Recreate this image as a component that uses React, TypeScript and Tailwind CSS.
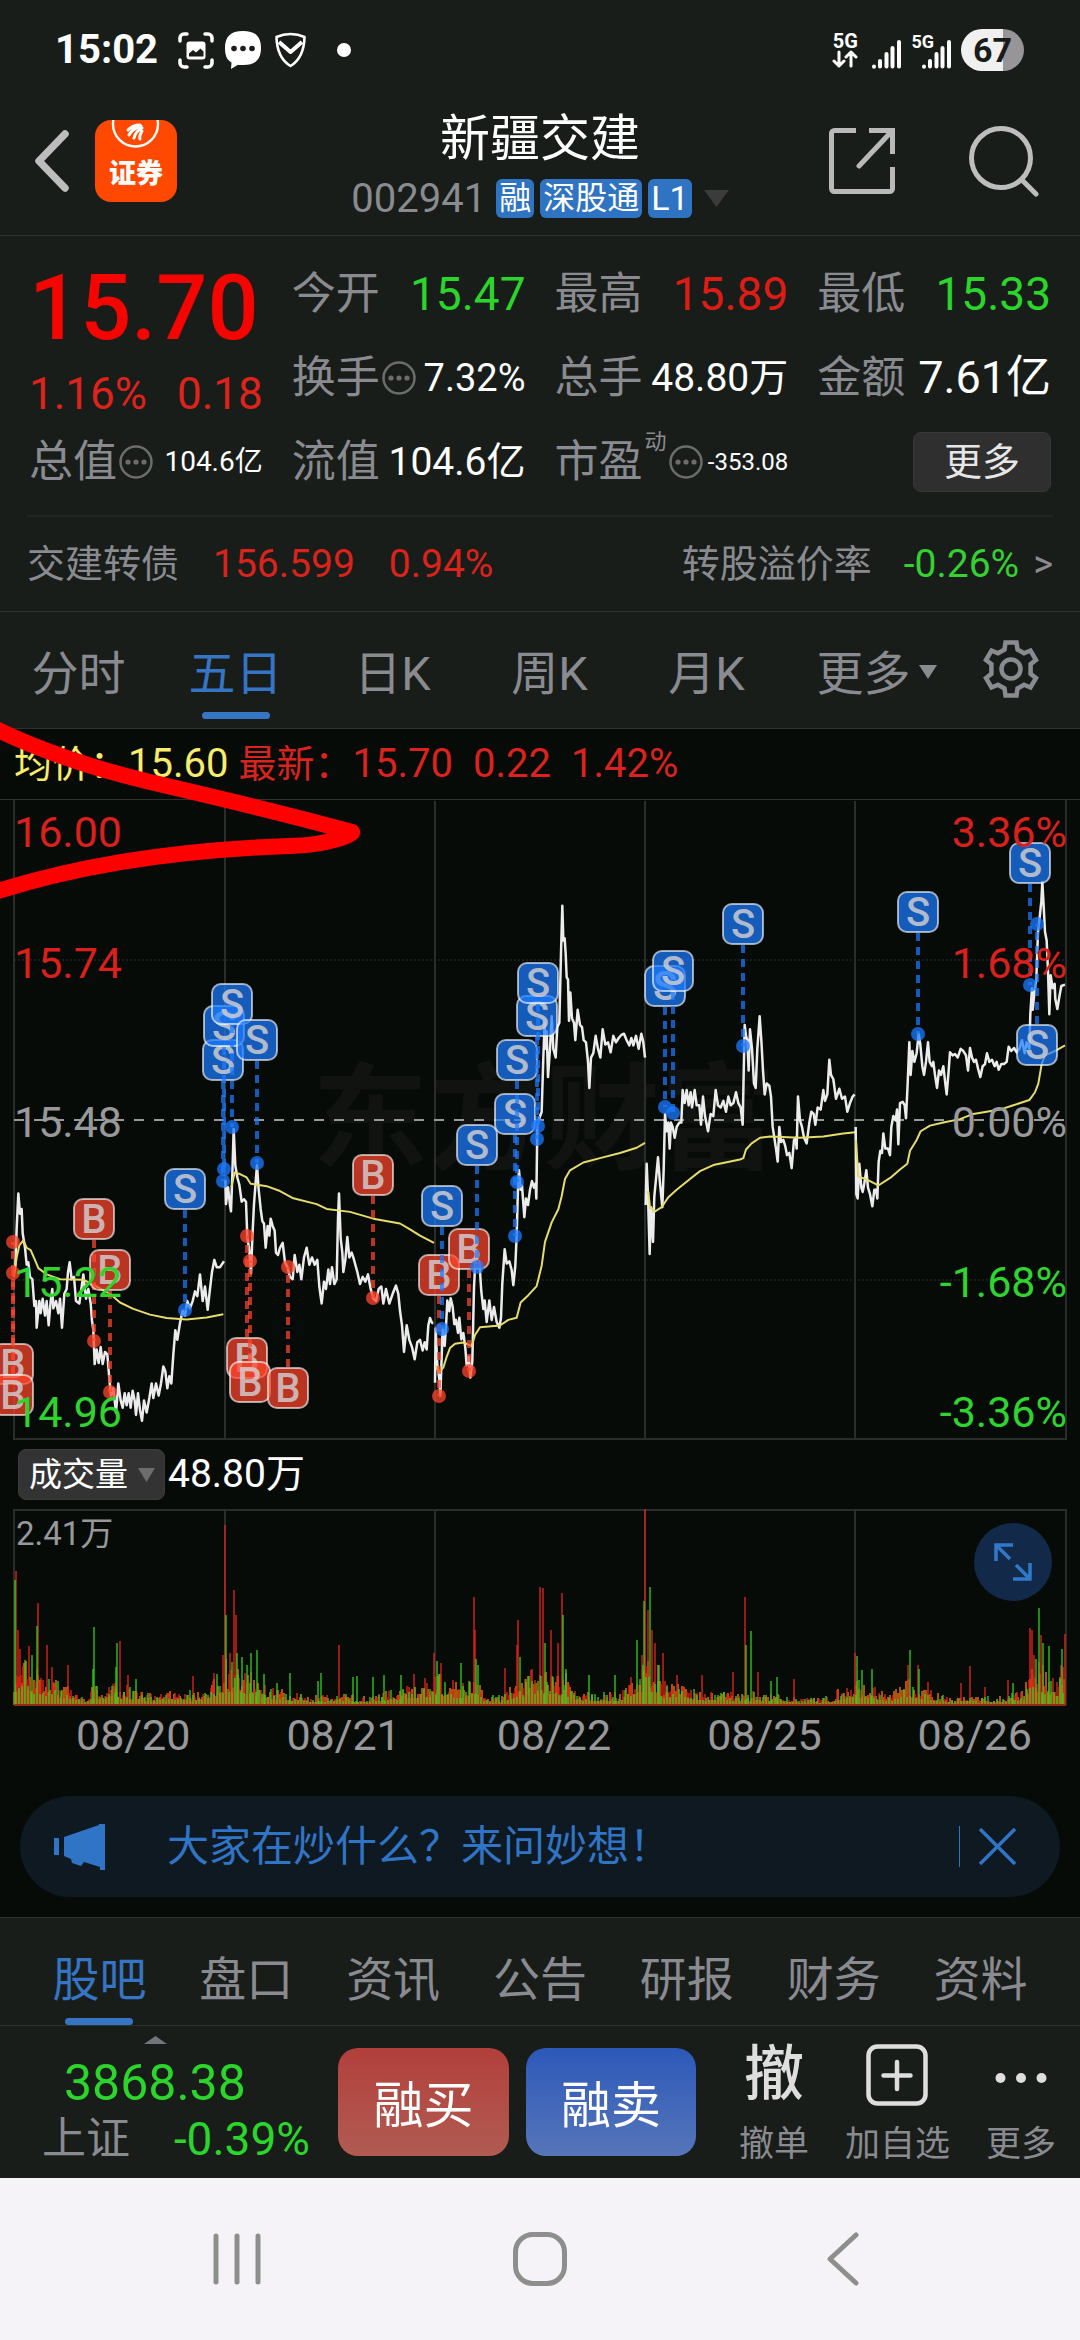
import React from "react";

const CJK = "font-['Roboto','Noto_Sans_CJK_SC',sans-serif]";

/* ---------- price chart data ---------- */

type Segment = { transform: string; price: string; average: string };

const LEFT = "translate(0 700) scale(0.33333 0.48473)";
const RIGHT = "translate(400 780) scale(0.33333 0.43366)";

const segments: Segment[] = [
  {
    transform: LEFT,
    price:
      "42,1180 46,1165 50,1090 55,1018 60,1060 65,1050 68,1100 75,1130 80,1165 85,1160 90,1190 97,1195 103,1250 108,1240 110,1295 118,1240 122,1265 128,1235 135,1270 140,1240 146,1290 152,1240 157,1215 160,1255 168,1240 175,1265 180,1235 186,1295 193,1225 200,1215 204,1180 209,1160 215,1195 222,1190 228,1240 238,1245 250,1185 258,1235 265,1215 272,1245 276,1280 280,1300 284,1370 290,1340 296,1368 302,1335 308,1370 315,1345 322,1350 328,1400 333,1435 340,1420 348,1470 355,1410 362,1445 368,1460 374,1430 380,1455 386,1430 392,1460 398,1425 404,1445 408,1475 414,1430 420,1465 426,1487 432,1445 440,1470 448,1440 455,1410 460,1440 468,1410 476,1435 483,1410 490,1375 496,1385 502,1420 508,1395 514,1410 520,1350 526,1300 532,1320 540,1285 548,1260 555,1270 562,1240 570,1255 578,1240 585,1220 592,1230 600,1185 608,1240 615,1210 623,1258 630,1215 636,1180 643,1155 650,1170 660,1170 672,1158",
    average:
      "42,1190 50,1150 58,1125 70,1115 80,1130 92,1135 108,1160 115,1172 140,1185 180,1195 250,1196 290,1210 330,1225 360,1243 400,1256 450,1268 500,1275 560,1278 620,1274 670,1267",
  },
  {
    transform: LEFT,
    price:
      "676,990 678,1040 684,1005 690,1042 693,1055 697,980 701,885 706,960 712,985 718,1000 725,1035 732,1030 738,1035 742,1110 747,1130 750,1155 753,1183 757,1110 762,1040 768,985 771,960 776,1010 782,1050 787,1075 792,1080 797,1130 803,1085 808,1105 812,1070 818,1085 824,1095 828,1140 834,1145 840,1130 848,1120 855,1160 862,1170 870,1190 878,1195 884,1145 892,1180 898,1165 904,1195 912,1150 920,1130 928,1165 936,1150 944,1165 952,1155 958,1210 965,1245 972,1200 978,1215 985,1175 990,1205 996,1170 1003,1205 1010,1195 1014,1070 1017,1018 1022,1110 1027,1140 1030,1180 1036,1155 1042,1108 1048,1150 1055,1140 1060,1150 1066,1165 1072,1180 1080,1205 1088,1190 1096,1200 1104,1185 1112,1215 1120,1235 1128,1240 1136,1215 1144,1210 1150,1245 1158,1215 1168,1245 1178,1225 1188,1208 1195,1225 1200,1260 1206,1290 1212,1345 1220,1290 1228,1320 1236,1335 1244,1360 1252,1325 1260,1320 1268,1342 1274,1325 1280,1340 1285,1290 1290,1275 1296,1285 1300,1285",
    average:
      "694,1005 704,975 720,978 740,985 752,998 800,1003 840,1013 880,1028 950,1040 980,1050 1050,1056 1120,1070 1200,1080 1230,1092 1260,1105 1302,1120",
  },
  {
    transform: RIGHT,
    price:
      "105,1390 107,1265 112,1350 118,1380 121,1420 125,1330 128,1265 134,1305 138,1260 142,1200 148,1225 152,1195 158,1215 163,1255 168,1245 174,1275 178,1240 184,1290 190,1275 196,1310 200,1350 206,1330 211,1378 217,1340 222,1170 226,1110 232,1125 238,1110 244,1180 250,1220 254,1200 260,1250 268,1200 275,1245 282,1215 290,1250 298,1263 303,1240 307,1160 314,1082 320,1115 328,1110 335,1130 340,1165 346,1120 350,1050 354,940 357,900 362,945 366,935 373,1008 378,965 384,980 390,945 396,925 402,940 407,930 409,965 412,800 418,780 425,765 430,640 434,560 438,620 440,580 444,685 450,620 455,545 460,620 467,640 472,570 478,560 483,400 487,290 490,370 494,365 497,400 500,455 504,460 507,555 511,490 516,550 522,560 526,600 533,530 540,565 546,570 551,600 558,605 564,650 568,710 573,640 580,630 587,590 594,620 601,640 608,575 616,610 624,605 632,628 640,590 648,605 656,595 664,588 672,585 680,600 688,612 694,595 700,612 708,590 716,620 724,585 730,605 735,640",
    average:
      "108,1350 118,1365 130,1355 140,1330 150,1310 165,1300 190,1297 215,1305 225,1280 240,1262 300,1258 325,1245 350,1240 362,1205 385,1188 410,1167 425,1120 435,1065 455,1020 475,990 485,960 495,920 510,900 550,882 600,872 660,860 710,848 735,837",
  },
  {
    transform: RIGHT,
    price:
      "737,980 740,885 744,960 749,1093 753,985 759,1065 763,960 768,920 774,870 780,930 787,985 791,900 795,770 800,810 805,790 809,850 813,790 818,800 824,825 830,800 838,790 844,790 848,715 854,745 860,715 866,750 872,720 876,755 884,715 890,750 898,750 903,795 909,730 915,775 924,810 932,770 940,775 947,715 954,750 962,755 970,740 978,765 985,730 992,750 1000,745 1008,720 1015,745 1022,755 1028,795 1034,565 1038,590 1042,600 1046,670 1050,575 1056,620 1062,700 1067,710 1072,620 1079,545 1084,600 1089,670 1094,725 1100,700 1108,705 1113,730 1118,800 1124,830 1128,850 1133,880 1138,800 1143,835 1150,830 1156,845 1161,865 1168,860 1175,895 1182,830 1187,825 1190,850 1194,730 1200,785 1206,800 1212,825 1220,838 1228,790 1234,765 1241,770 1246,795 1253,755 1262,760 1270,715 1275,740 1282,725 1288,645 1293,680 1300,690 1308,735 1318,712 1326,735 1335,730 1342,765 1350,745 1358,730 1364,725",
    average:
      "740,950 745,950 750,985 765,995 785,985 805,962 830,945 870,920 900,902 940,888 1020,875 1030,872 1038,852 1055,838 1080,825 1110,822 1200,825 1270,822 1330,815 1366,812",
  },
  {
    transform: RIGHT,
    price:
      "1367,800 1369,955 1373,965 1378,885 1384,940 1388,950 1393,930 1399,900 1404,940 1410,955 1417,983 1423,945 1428,945 1432,965 1436,880 1441,855 1446,860 1450,815 1456,850 1464,850 1470,865 1474,800 1480,775 1487,785 1491,760 1495,840 1500,745 1508,742 1514,750 1518,780 1523,700 1528,605 1532,680 1537,625 1543,650 1550,630 1556,585 1561,610 1567,660 1572,680 1578,650 1584,605 1589,650 1596,660 1600,650 1605,680 1611,710 1617,670 1623,680 1630,660 1636,700 1640,725 1646,670 1650,628 1658,635 1665,632 1673,640 1682,620 1690,625 1698,635 1704,670 1710,618 1716,640 1722,650 1728,645 1734,665 1741,685 1748,660 1755,655 1761,630 1768,650 1776,645 1784,660 1790,650 1796,668 1804,655 1812,655 1820,650 1826,615 1834,625 1842,618 1850,628 1858,620 1866,600 1874,630 1880,605 1888,620 1891,540 1896,480 1898,530 1904,485 1909,460 1914,350 1920,310 1924,280 1927,235 1931,290 1935,350 1940,370 1944,440 1948,540 1952,450 1958,480 1964,470 1966,505 1972,528 1978,500 1984,475 1995,472",
    average:
      "1368,830 1375,915 1390,918 1410,925 1435,935 1475,915 1500,898 1522,885 1530,855 1550,830 1562,810 1590,797 1630,790 1680,782 1720,770 1800,760 1840,750 1888,738 1905,720 1915,700 1925,655 1935,635 1965,625 1995,612",
  },
];

/* side, tag centre x, tag centre y, trade point y */
type Trade = ["S" | "B", number, number, number];

const trades: Trade[] = [
  ["B", 13, 1364, 1242],
  ["B", 13, 1395, 1273],
  ["B", 94, 1219, 1341],
  ["B", 110, 1270, 1392],
  ["S", 185, 1189, 1310],
  ["S", 223, 1060, 1181],
  ["S", 224, 1026, 1169],
  ["S", 232, 1004, 1127],
  ["S", 257, 1040, 1163],
  ["B", 247, 1358, 1236],
  ["B", 250, 1382, 1261],
  ["B", 288, 1388, 1267],
  ["B", 373, 1175, 1298],
  ["B", 439, 1275, 1396],
  ["S", 442, 1206, 1329],
  ["B", 469, 1249, 1371],
  ["S", 477, 1145, 1267],
  ["S", 515, 1114, 1236],
  ["S", 517, 1060, 1182],
  ["S", 537, 1016, 1139],
  ["S", 538, 983, 1126],
  ["S", 665, 986, 1107],
  ["S", 673, 971, 1113],
  ["S", 743, 924, 1046],
  ["S", 918, 912, 1034],
  ["S", 1030, 863, 985],
  ["S", 1037, 1045, 924],
];

const axis: [string, string, number, string][] = [
  ["16.00", "3.36%", 847, "#d9201a"],
  ["15.74", "1.68%", 978, "#d9201a"],
  ["15.48", "0.00%", 1137, "#99999b"],
  ["15.22", "-1.68%", 1297, "#2fd42f"],
  ["14.96", "-3.36%", 1427, "#2fd42f"],
];

const dayLines = [225, 435, 645, 855];

/* ---------- volume data ---------- */

const volumeBase: [number, number][] = [
  [14, 44], [30, 42], [45, 26], [70, 20], [85, 8], [92, 18], [120, 22], [140, 13], [160, 10],
  [180, 15], [200, 13], [215, 26], [225, 45], [240, 42], [260, 20], [290, 14], [310, 8], [340, 12],
  [370, 8], [400, 18], [420, 24], [440, 30], [460, 22], [478, 22], [485, 8], [500, 10], [520, 24],
  [535, 35], [550, 32], [565, 30], [580, 12], [620, 12], [640, 42], [655, 42], [665, 22], [700, 15],
  [740, 11], [760, 15], [780, 12], [800, 6], [830, 9], [850, 24], [860, 24], [875, 17], [890, 11],
  [910, 26], [930, 15], [950, 7], [1000, 8], [1025, 14], [1030, 48], [1045, 36], [1055, 24], [1066, 40],
];

const redPeaks: [number, number][] = [
  [16, 134], [18, 75], [20, 56], [29, 59], [38, 102], [47, 60], [52, 38], [68, 40], [120, 64],
  [128, 30], [193, 29], [214, 32], [223, 50], [225, 180], [230, 52], [234, 115], [236, 90], [339, 60],
  [414, 31], [434, 52], [441, 42], [474, 108], [475, 75], [505, 37], [517, 60], [518, 85], [532, 36],
  [540, 118], [543, 117], [551, 75], [558, 62], [562, 112], [642, 50], [645, 196], [648, 95],
  [652, 75], [655, 62], [663, 52], [677, 30], [702, 30], [733, 33], [745, 108], [758, 33], [794, 26],
  [855, 52], [908, 40], [918, 40], [928, 23], [961, 22], [970, 39], [985, 18], [1008, 25],
  [1030, 77], [1032, 75], [1034, 50], [1041, 70], [1061, 40], [1065, 71],
];

const greenPeaks: [number, number][] = [
  [15, 125], [32, 50], [37, 79], [93, 36], [94, 78], [116, 38], [117, 62], [136, 26], [226, 90],
  [237, 52], [242, 48], [247, 40], [251, 52], [257, 55], [264, 31], [277, 22], [290, 32], [318, 24],
  [321, 32], [353, 28], [357, 29], [373, 28], [384, 30], [401, 30], [437, 44], [461, 42], [476, 46],
  [478, 40], [520, 48], [545, 62], [563, 90], [566, 36], [589, 30], [615, 30], [637, 65], [644, 104],
  [650, 118], [659, 40], [746, 60], [751, 74], [771, 24], [777, 28], [857, 49], [862, 35], [872, 36],
  [910, 55], [919, 36], [1013, 22], [1039, 97], [1043, 62], [1049, 59], [1062, 56],
];

const BASELINE = 1705;

function baseHeight(x: number) {
  for (let i = 1; i < volumeBase.length; i++) {
    const [x1, h1] = volumeBase[i];
    const [x0, h0] = volumeBase[i - 1];
    if (x <= x1) return h0 + ((h1 - h0) * (x - x0)) / (x1 - x0);
  }
  return 20;
}

function volumePath(peaks: [number, number][], start: number, step: number, seed: number) {
  let s = seed;
  let d = "";
  for (let x = start; x <= 1065; x += step) {
    s = (s * 16807) % 2147483647;
    const r = s / 2147483647;
    const h = Math.max(2, Math.round(baseHeight(x) * (0.3 + 0.8 * r * r)));
    d += `M${x} ${BASELINE}v-${h}`;
  }
  for (const [x, h] of peaks) d += `M${x} ${BASELINE}v-${h}`;
  return d;
}

const redVolume = volumePath(redPeaks, 15, 2, 4711);
const redFill = volumePath([], 14, 2, 977);
const greenVolume = volumePath(greenPeaks, 16, 3, 1234);

/* ---------- icons ---------- */

function MoreCircle() {
  return (
    <svg className="ml-0.5 size-[34px] shrink-0" viewBox="0 0 34 34" fill="#6c6c6c">
      <circle cx="17" cy="17" r="15.5" fill="none" stroke="#6c6c6c" strokeWidth="2.5" />
      <circle cx="9" cy="17" r="2.6" />
      <circle cx="17" cy="17" r="2.6" />
      <circle cx="25" cy="17" r="2.6" />
    </svg>
  );
}

function SignalBars() {
  return (
    <svg width="29" height="30" viewBox="0 0 29 30" stroke="#fff" strokeWidth="4" strokeLinecap="round">
      <path d="M2 27.5v.2M8 22v5.5M14.500 15v12.500M20.500 9v18.500M27 3v24.500" />
    </svg>
  );
}

/* ---------- sections ---------- */

function StatusBar() {
  return (
    <div className="flex h-[86px] items-center justify-between pt-[14px] pr-[56px] pl-[55px] text-white">
      <div className="flex items-center">
        <span className="text-[40px] leading-none font-bold">15:02</span>
        <svg className="ml-5" width="36" height="37" viewBox="0 0 36 37" fill="none" stroke="#fff" strokeWidth="3.500" strokeLinecap="round">
          <path d="M2 9V6a4 4 0 0 1 4-4h3M27 2h3a4 4 0 0 1 4 4v3M34 28v3a4 4 0 0 1-4 4h-3M9 35H6a4 4 0 0 1-4-4v-3" />
          <rect x="8.500" y="9.500" width="19" height="18" rx="3" fill="#fff" stroke="none" />
          <path d="M11 24.500v-3l4-3.500 3 2.500 4.500-4 3 3v5z" fill="#191d1a" stroke="none" />
        </svg>
        <svg className="ml-2.5" width="38" height="38" viewBox="0 0 38 38">
          <path fill="#fff" d="M19 0c13 0 18 6 18 17s-5 17-18 17c-2 0-4 0-5-.3L7 38l.5-6.500C2.500 28.500 1 24 1 17 1 6 6 0 19 0z" />
          <g fill="#191d1a">
            <circle cx="10" cy="17.500" r="2.800" />
            <circle cx="19" cy="17.500" r="2.800" />
            <circle cx="28" cy="17.500" r="2.800" />
          </g>
        </svg>
        <svg className="ml-3" width="33" height="36" viewBox="0 0 33 36" fill="none" stroke="#fff" strokeWidth="2.600" strokeLinejoin="round">
          <path d="M16.500 2c5 0 9.500 1 14 3-.3 13-4 23-14 29C6.500 28 2.800 18 2.500 5c4.500-2 9-3 14-3z" />
          <path d="M5 10l11.500 10L28 10" strokeWidth="4" />
        </svg>
        <span className="ml-[30px] size-[14px] rounded-full bg-white" />
      </div>
      <div className="flex items-center">
        <div className="flex flex-col items-center">
          <span className="text-[20px] leading-[18px] font-bold">5G</span>
          <svg width="26" height="18" viewBox="0 0 26 18" fill="none" stroke="#fff" strokeWidth="3" strokeLinecap="round" strokeLinejoin="round">
            <path d="M7 2v14M2 11l5 5 5-5M19 16V2M14 7l5-5 5 5" />
          </svg>
        </div>
        <span className="mt-2 ml-3.5 flex">
          <SignalBars />
        </span>
        <span className="-mt-4 ml-2.5 -mr-3 text-[18px] leading-[18px] font-bold">5G</span>
        <span className="mt-2 flex">
          <SignalBars />
        </span>
        <span className="ml-2.5 flex h-[42px] w-[63px] items-center justify-center rounded-full bg-linear-to-r from-[#f0f0f0] from-67% to-[#979597] to-67% text-[34px] leading-none font-bold text-[#191d1a]">
          67
        </span>
      </div>
    </div>
  );
}

function Header() {
  return (
    <header className="grid h-[150px] grid-cols-[1fr_auto_1fr] items-center border-b border-[#2e322f]">
      <div className="flex items-center pl-[34px]">
        <button type="button" aria-label="返回" className="mr-[26px]">
          <svg width="35" height="62" viewBox="0 0 35 62" fill="none" stroke="#bdbdbd" strokeWidth="7.500" strokeLinecap="round" strokeLinejoin="round">
            <path d="M31 4L5 31l26 27" />
          </svg>
        </button>
        <button type="button" className="relative flex size-[82px] items-end justify-center overflow-hidden rounded-2xl bg-[#ff4800] pb-3 text-[27px] leading-[32px] font-black text-white">
          <svg className="absolute inset-0" width="82" height="82" viewBox="0 0 82 82" fill="none" stroke="#fff" strokeLinecap="round">
            <circle cx="40.500" cy="4" r="22.500" strokeWidth="2.400" />
            <path strokeWidth="3" d="M33 10c3-3 7-5 12-5M34 15c2-4 6-7 12-9M39 18c1-4 4-8 8-10M45 19c-1-3 1-6 2-8" />
          </svg>
          证券
        </button>
      </div>
      <div className="flex flex-col items-center pt-1.5">
        <h1 className="text-[50px] leading-[60px] text-white">新疆交建</h1>
        <div className="mt-[10px] flex items-center">
          <span className="mr-2.5 text-[40px] leading-[40px] text-[#8a8b91]">002941</span>
          <span className="mr-[6px] rounded-md bg-[#2f73c3] px-[3px] text-[32px] leading-[39px] text-white">融</span>
          <span className="mr-[6px] rounded-md bg-[#2f73c3] px-[3px] text-[32px] leading-[39px] text-white">深股通</span>
          <span className="rounded-md bg-[#2f73c3] px-[3px] text-[34px] leading-[39px] text-white">L1</span>
          <svg className="ml-3" width="25" height="17" viewBox="0 0 25 17" fill="#3b3b3b">
            <path d="M0 0h25L12.500 17z" />
          </svg>
        </div>
      </div>
      <div className="flex items-center justify-end pr-[40px]">
        <button type="button" aria-label="分享" className="mr-[74px]">
          <svg width="66" height="68" viewBox="0 0 66 68" fill="none" stroke="#b9b9b9" strokeWidth="5">
            <path d="M27 3.500H5.500a3 3 0 0 0-3 3v55a3 3 0 0 0 3 3h55a3 3 0 0 0 3-3V40M40 3.500h23.500V27" />
            <path d="M63 4L30 39" strokeLinecap="round" />
          </svg>
        </button>
        <button type="button" aria-label="搜索">
          <svg width="71" height="72" viewBox="0 0 71 72" fill="none" stroke="#bdbdbd" strokeWidth="5" strokeLinecap="round">
            <circle cx="32" cy="33" r="29.500" />
            <path d="M53 55l14 14" />
          </svg>
        </button>
      </div>
    </header>
  );
}

function Stat({ label, info, children }: { label: React.ReactNode; info?: boolean; children: React.ReactNode }) {
  return (
    <div className="flex items-center">
      <dt className="flex items-center text-[44px] leading-[60px] whitespace-nowrap text-[#8a8b91]">
        {label}
        {info && <MoreCircle />}
      </dt>
      <dd className="ml-auto flex items-center leading-[60px] whitespace-nowrap">{children}</dd>
    </div>
  );
}

function Quote() {
  return (
    <section className="border-b border-[#2e322f] px-[29px] pt-4">
      <dl className="grid grid-cols-4 grid-rows-[84px_84px_84px] gap-x-[29px] text-white">
        <div className="row-span-2 pt-2 text-[#de231c]">
          <p className="text-[90px] leading-[98px] font-medium text-[#f40500]">15.70</p>
          <p className="flex justify-between pt-2 text-[44px] leading-[56px]">
            <span>1.16%</span>
            <span>0.18</span>
          </p>
        </div>
        <Stat label="今开">
          <span className="text-[46px] text-[#2bd52b]">15.47</span>
        </Stat>
        <Stat label="最高">
          <span className="text-[46px] text-[#de1c16]">15.89</span>
        </Stat>
        <Stat label="最低">
          <span className="text-[46px] text-[#2bd52b]">15.33</span>
        </Stat>
        <Stat label="换手" info>
          <span className="text-[38px]">7.32%</span>
        </Stat>
        <Stat label="总手">
          <span className="text-[39px]">48.80万</span>
        </Stat>
        <Stat label="金额">
          <span className="text-[45px]">7.61亿</span>
        </Stat>
        <Stat label="总值" info>
          <span className="text-[28px]">104.6亿</span>
        </Stat>
        <Stat label="流值">
          <span className="text-[39px]">104.6亿</span>
        </Stat>
        <Stat
          label={
            <>
              市盈
              <sup className="-top-5 ml-0.5 text-[22px] leading-none">动</sup>
            </>
          }
          info
        >
          <span className="text-[24px]">-353.08</span>
        </Stat>
        <div className="flex items-center justify-end">
          <button type="button" className="h-[60px] w-[138px] rounded-lg border border-[#383838] bg-[#2f2f2f] text-[38px] leading-none text-[#e6e6e6]">
            更多
          </button>
        </div>
      </dl>
      <a href="#bond" className="-mx-0.5 mt-[11px] flex h-[96px] items-center border-t-2 border-[#222522] text-[38px] text-[#8a8b91]">
        <span>交建转债</span>
        <span className="ml-[34px] text-[39px] text-[#d9231c]">156.599</span>
        <span className="ml-[34px] text-[39px] text-[#d9231c]">0.94%</span>
        <span className="ml-auto">转股溢价率</span>
        <span className="ml-[32px] text-[39px] text-[#35d032]">-0.26%</span>
        <span className="ml-[14px]">&gt;</span>
      </a>
    </section>
  );
}

function Tab({ label, active, caret }: { label: string; active?: boolean; caret?: boolean }) {
  return (
    <button
      type="button"
      className={`flex h-full flex-col items-center justify-end gap-[10px] text-[47px] leading-[56px] whitespace-nowrap ${active ? "text-[#3575c4]" : "text-[#8a8b91]"}`}
    >
      <span className="relative">
        {label}
        {caret && (
          <svg className="absolute top-[19px] left-full ml-2" width="18" height="14" viewBox="0 0 18 14" fill="#8a8b91">
            <path d="M0 0h18L9 14z" />
          </svg>
        )}
      </span>
      <span className={`h-[7px] w-[68px] rounded-full ${active ? "bg-[#3575c4]" : ""}`} />
    </button>
  );
}

function PeriodTabs() {
  return (
    <nav className="grid h-[117px] grid-cols-[repeat(6,157fr)_138fr] border-b border-[#2e322f] pb-[9px]">
      <Tab label="分时" />
      <Tab label="五日" active />
      <Tab label="日K" />
      <Tab label="周K" />
      <Tab label="月K" />
      <Tab label="更多" caret />
      <button type="button" aria-label="设置" className="flex items-center justify-center pt-1.5">
        <svg width="58" height="58" viewBox="0 0 58 58" fill="none" stroke="#8a8b91" strokeWidth="4.500">
          <path d="M23.500 2.500h11l1 7 6.500 3.800 6.500-2.800 5.500 9.500-5.400 4.200v9.600l5.400 4.200-5.500 9.500-6.500-2.800-6.500 3.800-1 7h-11l-1-7-6.500-3.800-6.500 2.800L4 38l5.400-4.200v-9.600L4 20l5.500-9.500 6.500 2.800 6.500-3.800z" />
          <circle cx="29" cy="29" r="9.500" />
        </svg>
      </button>
    </nav>
  );
}

function PriceChart() {
  return (
    <svg className={`block h-auto w-full ${CJK}`} viewBox="0 800 1080 640" role="img" aria-label="五日走势图">
      <text x="312" y="1160" fontSize="116" fontWeight="700" fill="#101310">
        东方财富
      </text>
      <g stroke="#2b2d2b" strokeWidth="2" fill="none">
        <path d="M14 800V1439H1066V800" />
        {dayLines.map((x) => (
          <path key={x} d={`M${x} 801V1439`} />
        ))}
      </g>
      <path d="M14 960H1066M14 1280H1066" stroke="#2e312e" strokeDasharray="2 2" />
      <path d="M14 1120H1066" stroke="#97999a" strokeWidth="2" strokeDasharray="10 10" />

      {segments.map((s, i) => (
        <g key={i} transform={s.transform} fill="none" strokeLinejoin="round">
          <polyline points={s.price} stroke="#ececec" strokeWidth="2.5" vectorEffect="non-scaling-stroke" />
          <polyline points={s.average} stroke="#e6dc6a" strokeWidth="2" vectorEffect="non-scaling-stroke" />
        </g>
      ))}

      {trades.map(([side, x, y, point], i) => {
        const color = side === "S" ? "#1c7aff" : "#ff452c";
        const from = point > y ? y + 21 : y - 21;
        return (
          <g key={i}>
            <path d={`M${x} ${from}V${point}`} stroke={color} strokeOpacity="0.72" strokeWidth="4" strokeDasharray="8 6" />
            <circle cx={x} cy={point} r="7" fill={color} fillOpacity="0.75" />
            <rect x={x - 20} y={y - 20} width="40" height="40" rx="9" fill={color} fillOpacity="0.72" stroke="#fff" strokeOpacity="0.62" strokeWidth="2" />
            <text x={x} y={y + 14} fontSize="40" fontWeight="500" textAnchor="middle" fill="#d4d0d2" fillOpacity="0.82">
              {side}
            </text>
          </g>
        );
      })}

      {axis.map(([price, change, y, color]) => (
        <g key={price} fontSize="43" fill={color}>
          <text x="14" y={y}>
            {price}
          </text>
          <text x="1067" y={y} textAnchor="end">
            {change}
          </text>
        </g>
      ))}
    </svg>
  );
}

function VolumeChart() {
  return (
    <div className="relative">
      <svg className={`block h-auto w-full ${CJK}`} viewBox="0 1509 1080 197" role="img" aria-label="成交量图">
        <g stroke="#2b2d2b" strokeWidth="2" fill="none">
          <path d="M14 1705V1510H1066V1705" />
          {dayLines.map((x) => (
            <path key={x} d={`M${x} 1510V1705`} />
          ))}
        </g>
        <path d={redFill} stroke="#a8560c" strokeWidth="2" />
        <path d={redVolume} stroke="#e0241a" strokeWidth="1.500" strokeOpacity="0.9" />
        <path d={greenVolume} stroke="#35d420" strokeWidth="1.500" strokeOpacity="0.85" />
        <path d="M14 1705H1066" stroke="#8f2c14" strokeWidth="2" />
        <text x="16" y="1545" fontSize="33" fill="#98989a">
          2.41万
        </text>
      </svg>
      <button type="button" aria-label="放大" className="absolute top-[14px] right-[28px] flex size-[78px] items-center justify-center rounded-full bg-[#13294a]">
        <svg width="40" height="40" viewBox="0 0 40 40" fill="none" stroke="#3078c8" strokeWidth="3.500">
          <path d="M3 19V3h17M3 3l14 14M37 21v16H20M37 37L23 23" />
        </svg>
      </button>
    </div>
  );
}

function Chart() {
  return (
    <section className="relative bg-[#070b08]">
      <p className="flex h-[71px] items-center border-b border-[#2e322f] pl-[14px] text-[38px] leading-none whitespace-nowrap text-[#d9231c]">
        <span className="text-[#f8ec6c]">均价：</span>
        <span className="text-[40px] text-[#f8ec6c]">15.60</span>
        <span className="ml-[10px]">最新：</span>
        <span className="text-[40px]">15.70</span>
        <span className="ml-[20px] text-[40px]">0.22</span>
        <span className="ml-[20px] text-[40px]">1.42%</span>
      </p>
      <PriceChart />
      <div className="flex h-[69px] items-center pl-[18px] text-white">
        <label className="relative mr-[3px] flex">
          <select aria-label="指标" className="h-[51px] w-[147px] appearance-none rounded-lg border border-[#3c3c3c] bg-[#333] pl-[10px] text-[33px] text-white">
            <option>成交量</option>
          </select>
          <svg className="pointer-events-none absolute top-[19px] right-[10px]" width="17" height="14" viewBox="0 0 17 14" fill="#6d6d6d">
            <path d="M0 0h17L8.500 14z" />
          </svg>
        </label>
        <span className="text-[39px] leading-none">48.80万</span>
      </div>
      <VolumeChart />
      <div className="ml-[28px] grid h-[58px] grid-cols-5 items-center text-center text-[43px] leading-none text-[#98989a]">
        <span>08/20</span>
        <span>08/21</span>
        <span>08/22</span>
        <span>08/25</span>
        <span>08/26</span>
      </div>
      <svg className="pointer-events-none absolute top-[-9px] left-0" width="370" height="190" viewBox="0 720 370 190" fill="none" stroke="#f00" strokeWidth="16" strokeLinejoin="round">
        <path d="M-14 724C40 752 100 770 150 782C215 797 290 815 352 832C354 834 330 845 290 846C200 849 90 860 -14 895" />
      </svg>
    </section>
  );
}

function Notice() {
  return (
    <div className="bg-[#070b08] px-5 pt-8 pb-5">
      <div className="flex h-[101px] items-center rounded-full bg-[#0f1922] pr-[44px] pl-[34px] text-[#3075c5]">
        <svg width="51" height="46" viewBox="0 0 51 46" fill="#3075c5">
          <path d="M0 14h5v17H0zM10 13l35-12V0h6v46h-5v-3l-16-5-3 4-9-3-1-4-7-3z" />
        </svg>
        <a href="#ask" className="ml-[62px] text-[42px] leading-[60px]">
          大家在炒什么？来问妙想！
        </a>
        <span className="ml-auto h-[41px] w-px bg-[#3075c5]" />
        <button type="button" aria-label="关闭" className="ml-[19px]">
          <svg width="37" height="37" viewBox="0 0 37 37" fill="none" stroke="#3075c5" strokeWidth="3.500">
            <path d="M1 1l35 35M36 1L1 36" />
          </svg>
        </button>
      </div>
    </div>
  );
}

function BottomBar() {
  return (
    <div className="flex h-[153px] border-t border-[#2e322f] pr-[24px]">
      <a href="#index" className="flex w-[338px] flex-col pt-[10px] pr-[28px] pl-[42px]">
        <svg className="ml-[102px]" width="23" height="8" viewBox="0 0 23 8" fill="#74757b">
          <path d="M11.500 0L23 8H0z" />
        </svg>
        <span className="ml-[22px] text-[50px] leading-[78px] text-[#2bd52b]">3868.38</span>
        <span className="flex justify-between text-[44px] leading-[34px] text-[#8a8b91]">
          上证<span className="text-[46px] text-[#2bd52b]">-0.39%</span>
        </span>
      </a>
      <div className="flex gap-[17px] pt-[22px]">
        <button type="button" className="h-[108px] w-[171px] rounded-[20px] bg-linear-to-b from-[#b23f3b] to-[#b05b52] pt-2 text-[50px] leading-none text-white">
          融买
        </button>
        <button type="button" className="h-[108px] w-[170px] rounded-[20px] bg-linear-to-b from-[#2c58b9] to-[#5675b9] pt-2 text-[50px] leading-none text-white">
          融卖
        </button>
      </div>
      <div className="ml-auto flex gap-[36px] pt-[18px] text-[35px] leading-[40px] text-[#8a8b91]">
        <button type="button" className="flex flex-col items-center">
          <span className="flex h-[62px] items-center text-[60px] leading-none font-medium text-[#dedede]">撤</span>
          <span className="mt-[19px]">撤单</span>
        </button>
        <button type="button" className="flex flex-col items-center">
          <svg width="62" height="62" viewBox="0 0 62 62" fill="none" stroke="#dedede" strokeWidth="4.500" strokeLinecap="round">
            <rect x="2.500" y="2.500" width="57" height="57" rx="9" />
            <path d="M31 18v27M17.500 31.500h27" />
          </svg>
          <span className="mt-[19px]">加自选</span>
        </button>
        <button type="button" className="flex flex-col items-center">
          <svg width="62" height="62" viewBox="0 0 62 62" fill="#dedede">
            <circle cx="10.500" cy="34" r="5" />
            <circle cx="31" cy="34" r="5" />
            <circle cx="51.500" cy="34" r="5" />
          </svg>
          <span className="mt-[19px]">更多</span>
        </button>
      </div>
    </div>
  );
}

function SystemNav() {
  return (
    <nav className="grid h-[162px] grid-cols-3 items-center bg-[#f6f3f8] px-[86px]">
      <button type="button" aria-label="最近任务" className="flex justify-center">
        <svg width="48" height="54" viewBox="0 0 48 54" stroke="#8d8f8d" strokeWidth="5" strokeLinecap="round">
          <path d="M3 4v46M24 4v46M45 4v46" />
        </svg>
      </button>
      <button type="button" aria-label="主屏幕" className="flex justify-center">
        <span className="size-[54px] rounded-[20px] border-5 border-[#8d8f8d]" />
      </button>
      <button type="button" aria-label="返回" className="flex justify-center">
        <svg width="34" height="54" viewBox="0 0 34 54" fill="none" stroke="#8d8f8d" strokeWidth="5" strokeLinecap="round" strokeLinejoin="round">
          <path d="M30 3L4 27l26 24" />
        </svg>
      </button>
    </nav>
  );
}

export default function App() {
  return (
    <main className={`w-full overflow-hidden bg-[#191d1a] ${CJK}`}>
      <StatusBar />
      <Header />
      <Quote />
      <PeriodTabs />
      <Chart />
      <Notice />
      <nav className="grid h-[108px] grid-cols-7 border-t border-[#2e322f] px-[26px]">
        <Tab label="股吧" active />
        <Tab label="盘口" />
        <Tab label="资讯" />
        <Tab label="公告" />
        <Tab label="研报" />
        <Tab label="财务" />
        <Tab label="资料" />
      </nav>
      <BottomBar />
      <SystemNav />
    </main>
  );
}
